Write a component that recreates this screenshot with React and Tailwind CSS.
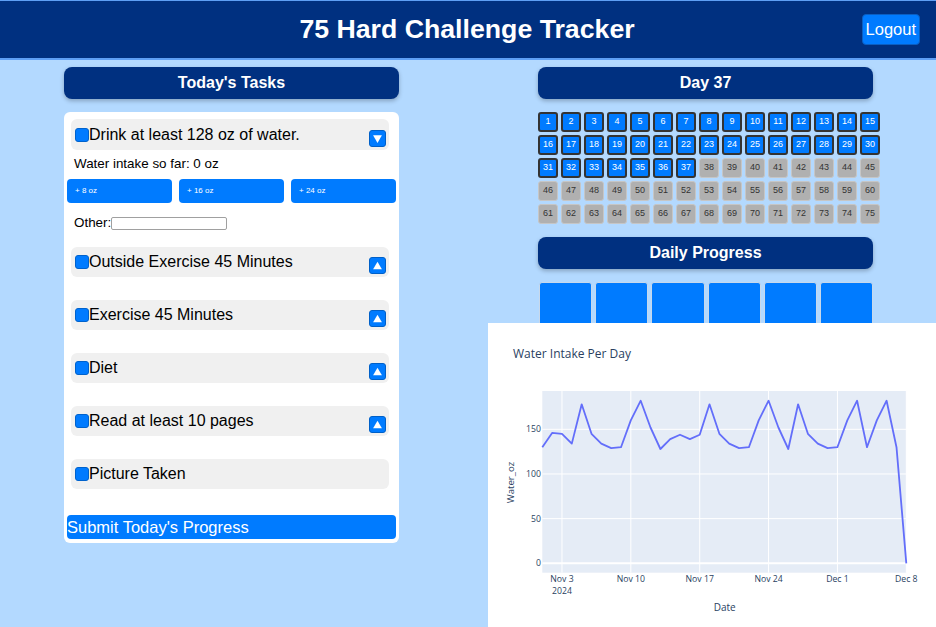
import React from 'react';

const tasks = [
    { label: 'Outside Exercise 45 Minutes', arrow: 'up' },
    { label: 'Exercise 45 Minutes', arrow: 'up' },
    { label: 'Diet', arrow: 'up' },
    { label: 'Read at least 10 pages', arrow: 'up' },
    { label: 'Picture Taken', arrow: null },
];

const water = [
    130, 146, 145, 134, 178, 145, 134, 129, 130, 160, 182, 152, 128, 139, 144, 139, 144, 178, 145,
    134, 129, 130, 160, 182, 152, 128, 178, 145, 134, 129, 130, 160, 182, 130, 160, 182, 130, 0,
];

const CURRENT_DAY = 37;

const SectionHeader = ({ children }) => (
    <div className="h-[32px] rounded-lg bg-[#003080] shadow-[0_2px_4px_rgba(0,0,0,0.25)] flex items-center justify-center text-white font-bold text-[16px]">
        {children}
    </div>
);

const Checkbox = () => (
    <span className="w-[14px] h-[14px] shrink-0 rounded-[3px] bg-[#007bff] border border-[#0062cc]" />
);

const ArrowButton = ({ dir }) => (
    <button className="ml-auto mt-[7px] w-[17px] h-[17px] shrink-0 rounded-[3px] bg-[#007bff] border border-[#0060c8] flex items-center justify-center">
        <svg width="11" height="11" viewBox="0 0 10 10">
            {dir === 'down' ? (
                <polygon points="1,2 9,2 5,9" fill="white" />
            ) : (
                <polygon points="1,8.5 9,8.5 5,1.5" fill="white" />
            )}
        </svg>
    </button>
);

const TaskRow = ({ label, arrow, tall }) => (
    <div className={`${tall ? 'h-[31px]' : 'h-[30px]'} ml-[4px] mr-[7px] bg-[#f0f0f0] rounded-md flex items-center pl-[4px] pr-[3px]`}>
        <Checkbox />
        <span className="text-[16px] text-black leading-none">{label}</span>
        {arrow && <ArrowButton dir={arrow} />}
    </div>
);

const WaterChart = () => {
    // plot area inside the 448x304 card
    const x0 = 54.3;
    const dx = 9.838;
    const yZero = 240.3;
    const k = 0.8933;
    const px = (i) => x0 + i * dx;
    const py = (v) => yZero - v * k;
    const points = water.map((v, i) => `${px(i).toFixed(1)},${py(v).toFixed(1)}`).join(' ');
    const xTicks = [
        { i: 2, label: 'Nov 3' },
        { i: 9, label: 'Nov 10' },
        { i: 16, label: 'Nov 17' },
        { i: 23, label: 'Nov 24' },
        { i: 30, label: 'Dec 1' },
        { i: 37, label: 'Dec 8' },
    ];
    const font = "'Open Sans', 'Liberation Sans', sans-serif";

    return (
        <svg width="448" height="304" viewBox="0 0 448 304">
            <rect x={x0} y="68" width="364" height="181.7" fill="#e5ecf6" />
            {xTicks.map((t) => (
                <line key={t.label} x1={px(t.i)} x2={px(t.i)} y1="68" y2="249.7" stroke="white" strokeWidth="1" />
            ))}
            {[50, 100, 150].map((v) => (
                <line key={v} x1={x0} x2={x0 + 364} y1={py(v)} y2={py(v)} stroke="white" strokeWidth="1" />
            ))}
            <line x1={x0} x2={x0 + 364} y1={yZero} y2={yZero} stroke="white" strokeWidth="2" />
            <polyline points={points} fill="none" stroke="#636efa" strokeWidth="1.8" strokeLinejoin="round" />

            <g fontFamily={font} fontSize="8.7" fill="#2a3f5f">
                {[0, 50, 100, 150].map((v) => (
                    <text key={v} x="53" y={py(v) + 3} textAnchor="end">{v}</text>
                ))}
                {xTicks.map((t) => (
                    <text key={t.label} x={px(t.i)} y="259" textAnchor="middle">{t.label}</text>
                ))}
                <text x={px(2)} y="270.5" textAnchor="middle">2024</text>
            </g>
            <text x="25" y="35" fontFamily={font} fontSize="12" fill="#2a3f5f">Water Intake Per Day</text>
            <text x="236.7" y="288" fontFamily={font} fontSize="10" fill="#2a3f5f" textAnchor="middle">Date</text>
            <text
                x="22.7"
                y="159.5"
                fontFamily={font}
                fontSize="9.6"
                fill="#2a3f5f"
                textAnchor="middle"
                transform="rotate(-90 22.7 159.5)"
                dy="3"
            >
                Water_oz
            </text>
        </svg>
    );
};

const App = () => {
    return (
        <div className="min-h-screen w-full bg-[#b3d9ff] relative font-['Liberation_Sans',Arial,sans-serif]">
            {/* Header */}
            <div className="h-[60px] bg-[#003080] border-t border-b-2 border-[#5e9ff5] flex items-center">
                <div className="flex-1" />
                <h1 className="ml-[14px] text-[26.7px] font-bold text-white leading-none">75 Hard Challenge Tracker</h1>
                <div className="flex-1 flex justify-end pr-[16px]">
                    <button className="h-[31px] px-[3px] rounded-[4px] bg-[#007bff] border border-[#0a5ec2] text-white text-[16.5px]">
                        Logout
                    </button>
                </div>
            </div>

            <div className="flex justify-between pl-[64px] pr-[63px] pt-[7px]">
                {/* Tasks column */}
                <div className="w-[335px]">
                    <SectionHeader>Today's Tasks</SectionHeader>
                    <div className="mt-[13px] bg-white rounded-md px-[3px] pt-[7px] pb-[3px]">
                        <TaskRow label="Drink at least 128 oz of water." arrow="down" tall />
                        <div className="pl-[7px] mt-[6px] text-[13.4px] leading-[16px] text-black">
                            Water intake so far: 0 oz
                        </div>
                        <div className="mt-[7px] grid grid-cols-3 gap-[7px]">
                            {['+ 8 oz', '+ 16 oz', '+ 24 oz'].map((b) => (
                                <button
                                    key={b}
                                    className="h-[24px] rounded-[4px] bg-[#007bff] text-white text-[8px] text-left pl-[8px]"
                                >
                                    {b}
                                </button>
                            ))}
                        </div>
                        <div className="mt-[12px] h-[16px] pl-[7px] flex items-center text-[13.4px] text-black">
                            <span>Other:</span>
                            <input className="w-[116px] h-[13px] border border-[#a0a0a0] rounded-[2px] bg-white" />
                        </div>
                        <div className="mt-[16px] flex flex-col gap-[23px]">
                            {tasks.map((t) => (
                                <TaskRow key={t.label} label={t.label} arrow={t.arrow} />
                            ))}
                        </div>
                        <button className="mt-[26px] w-full h-[24px] rounded-[4px] bg-[#007bff] text-white text-[16.5px] text-left leading-[24px]">
                            Submit Today's Progress
                        </button>
                    </div>
                </div>

                {/* Progress column */}
                <div className="w-[335px]">
                    <SectionHeader>Day {CURRENT_DAY}</SectionHeader>
                    <div className="mt-[13px] grid grid-cols-[repeat(15,20px)] gap-[3px]">
                        {Array.from({ length: 75 }, (_, i) => i + 1).map((n) =>
                            n <= CURRENT_DAY ? (
                                <div
                                    key={n}
                                    className="h-[20px] rounded-[3px] bg-[#007bff] border-2 border-[#333] flex items-center justify-center text-white text-[9px]"
                                >
                                    {n}
                                </div>
                            ) : (
                                <div
                                    key={n}
                                    className="h-[20px] rounded-[3px] bg-[#b0b0b0] border border-[#c6c6c6] flex items-center justify-center text-[#333] text-[9px]"
                                >
                                    {n}
                                </div>
                            )
                        )}
                    </div>
                    <div className="mt-[13px]">
                        <SectionHeader>Daily Progress</SectionHeader>
                    </div>
                    <div className="mt-[13px] pl-[1px] grid grid-cols-6 gap-[3px]">
                        {Array.from({ length: 6 }, (_, i) => (
                            <div key={i} className="h-[53px] rounded-[3px] bg-[#007bff] border border-[#c8d8ea]" />
                        ))}
                    </div>
                </div>
            </div>

            {/* Chart popup lying over the page */}
            <div className="absolute left-[488px] top-[323px] w-[448px] h-[304px] bg-white">
                <WaterChart />
            </div>
        </div>
    );
};

export default App;
